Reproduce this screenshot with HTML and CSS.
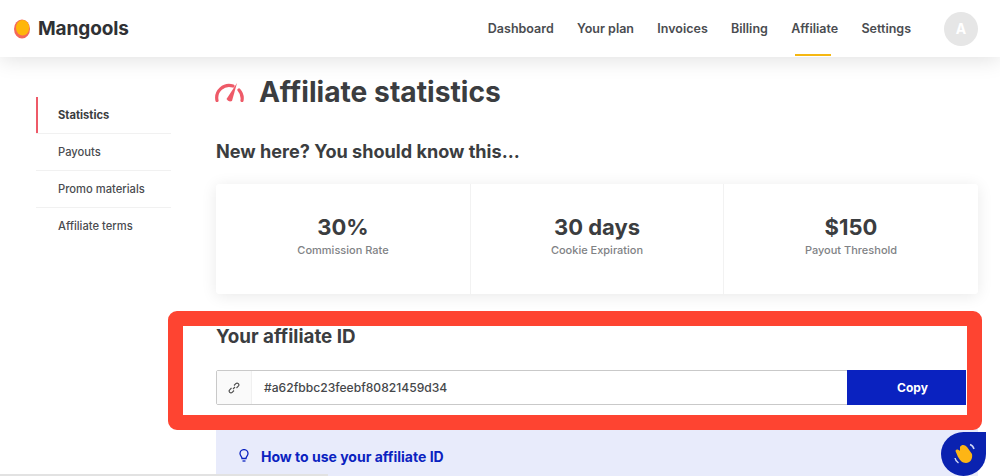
FILE: index.html
```html
<!DOCTYPE html>
<html lang="en">
<head>
<meta charset="utf-8">
<title>Affiliate statistics</title>
<link rel="stylesheet" href="styles.css">
</head>
<body>
<header class="topbar">
  <a class="brand">
    <svg class="brand-mark" width="18" height="20" viewBox="0 0 18 20"><ellipse cx="9" cy="10" rx="8" ry="9.5" fill="#f4685a"/><ellipse cx="9.6" cy="8.8" rx="6.6" ry="7.8" fill="#ffb60a"/></svg>
    <span class="brand-name">Mangools</span>
  </a>
  <nav class="mainnav">
    <a class="navlink">Dashboard</a>
    <a class="navlink">Your plan</a>
    <a class="navlink">Invoices</a>
    <a class="navlink">Billing</a>
    <a class="navlink navlink-active">Affiliate</a>
    <a class="navlink">Settings</a>
  </nav>
  <div class="avatar">A</div>
</header>
<div class="page">
  <aside class="sidebar">
    <a class="sidelink sidelink-active">Statistics</a>
    <a class="sidelink">Payouts</a>
    <a class="sidelink">Promo materials</a>
    <a class="sidelink">Affiliate terms</a>
  </aside>
  <main class="content">
    <div class="title-row">
      <svg class="gauge" width="30" height="20" viewBox="0 0 30 20" fill="none"><path d="M2 18.500A12.500 12.500 0 0 1 18 4" stroke="#ee5a68" stroke-width="3.200" stroke-linecap="round"/><path d="M24 8A12.500 12.500 0 0 1 27 18.500" stroke="#ee5a68" stroke-width="3.200" stroke-linecap="round"/><path d="M11.500 17L22 1L17 19Q13.500 20.500 11.500 17Z" fill="#ee5a68"/></svg>
      <h1 class="title">Affiliate statistics</h1>
    </div>
    <h2 class="subtitle">New here? You should know this...</h2>
    <section class="stats">
      <div class="stat"><div class="stat-value">30%</div><div class="stat-label">Commission Rate</div></div>
      <div class="stat"><div class="stat-value">30 days</div><div class="stat-label">Cookie Expiration</div></div>
      <div class="stat"><div class="stat-value">$150</div><div class="stat-label">Payout Threshold</div></div>
    </section>
    <h2 class="idtitle">Your affiliate ID</h2>
    <div class="idfield">
      <div class="idicon">
        <svg width="12" height="12" viewBox="0 0 12 12" fill="none" stroke="#4c4c4c" stroke-width="1.100"><path d="M5 7L7 5"/><path d="M6 3.500L7.800 1.700A1.700 1.700 0 0 1 10.300 4.200L8.500 6"/><path d="M6 8.500L4.200 10.300A1.700 1.700 0 0 1 1.700 7.800L3.500 6"/></svg>
      </div>
      <div class="idvalue">#a62fbbc23feebf80821459d34</div>
      <button class="copy">Copy</button>
    </div>
    <div class="tip">
      <svg width="10" height="14" viewBox="0 0 10 14" fill="none" stroke="#0a22c0" stroke-width="1.300"><path d="M3 9.500C3 7.800 1 7 1 4.600A4 4 0 0 1 9 4.600C9 7 7 7.800 7 9.500Z"/><path d="M3.500 12H6.500"/></svg>
      <span class="tip-text">How to use your affiliate ID</span>
    </div>
  </main>
</div>
<div class="annotation"></div>
<div class="chat">
  <svg width="24" height="24" viewBox="0 0 24 24" fill="none"><path d="M8 5C10 2 13 3 15 5L20 12C21 17 18 21 14 21C10 21 8 18 6 15L3.500 9C4 7 6 7 8 9Z" fill="#fdb515"/><path d="M3 16Q3.500 19 6.500 21" stroke="#cfd6f5" stroke-width="1.500"/><path d="M18 2.500Q21 3.500 22 7" stroke="#cfd6f5" stroke-width="1.500"/></svg>
</div>
<div class="bottomline"></div>
</body>
</html>
```
FILE: styles.css
```css
* { box-sizing: border-box; }
html, body { margin: 0; height: 476px; overflow: hidden; }
body { background: #fff; font-family: "Inter", "Liberation Sans", sans-serif; color: #3b3d40; position: relative; }
.topbar { height: 57px; display: flex; align-items: center; padding: 0 22px 0 13px; background: #fff; box-shadow: 0 2px 22px rgba(0,0,0,.13); position: relative; }
.brand { display: flex; align-items: center; gap: 7px; }
.brand-mark { display: block; margin-top: 1px; }
.brand-name { font-size: 19px; font-weight: 700; color: #2f3134; letter-spacing: -.1px; }
.mainnav { display: flex; gap: 23.300px; margin-left: auto; align-self: stretch; }
.navlink { display: flex; align-items: center; font-size: 12.500px; font-weight: 600; color: #4a4c50; position: relative; }
.navlink-active::after { content: ""; position: absolute; left: 4px; right: 7px; bottom: 1px; height: 2px; background: #f5b712; }
.avatar { width: 34px; height: 34px; margin-left: 33px; border-radius: 50%; background: #e6e6e6; color: #fff; display: flex; align-items: center; justify-content: center; font-weight: 700; font-size: 14px; }
.page { display: flex; padding-left: 36px; }
.sidebar { width: 135px; margin-top: 40px; flex: none; }
.sidelink { display: flex; align-items: center; height: 37px; padding-left: 22px; font-size: 11.200px; font-weight: 500; color: #4a4c50; border-bottom: 1px solid #f1f1f1; }
.sidelink:last-child { border-bottom-color: transparent; }
.sidelink-active { font-weight: 700; box-shadow: inset 2px 0 0 #ee5a68; color: #3b3d40; }
.content { width: 762px; margin-left: 45px; }
.title-row { display: flex; align-items: center; height: 40px; margin-top: 15px; gap: 14px; }
.gauge { display: block; margin-left: -1px; }
.title { margin: 0; font-size: 28.200px; font-weight: 700; color: #3b3d40; }
.subtitle { margin: 27px 0 0; font-size: 18.100px; line-height: 24px; font-weight: 700; color: #3b3d40; }
.stats { display: grid; grid-template-columns: 254px 253px 255px; height: 110px; margin-top: 21px; background: #fff; border-radius: 3px; box-shadow: 0 2px 16px rgba(0,0,0,.09); }
.stat { display: flex; flex-direction: column; align-items: center; padding-top: 30px; border-left: 1px solid #f2f2f2; }
.stat:first-child { border-left: 0; }
.stat-value { font-size: 22px; line-height: 26px; font-weight: 700; color: #3b3d40; }
.stat-label { font-size: 11px; line-height: 14px; margin-top: 3px; color: #808285; font-weight: 500; }
.idtitle { margin: 31px 0 0; font-size: 18.800px; line-height: 24px; font-weight: 700; color: #3b3d40; }
.idfield { display: flex; width: 750px; height: 35px; margin-top: 21px; border: 1px solid #c9c9c9; border-radius: 2px 0 0 2px; }
.idicon { width: 35px; display: flex; align-items: center; justify-content: center; background: #fafafa; border-right: 1px solid #f0f0f0; }
.idvalue { flex: 1; display: flex; align-items: center; padding-left: 12px; font-size: 12.100px; font-weight: 500; color: #45474a; }
.copy { width: 119px; margin: -1px -1px -1px 0; padding: 0 0 0 12px; border: 0; background: #0a22c0; color: #fff; font: 700 12px "Inter", "Liberation Sans", sans-serif; }
.tip { display: flex; align-items: center; gap: 12px; height: 60px; margin-top: 15px; padding: 12px 0 0 23px; background: #e8ebfb; }
.tip-text { font-size: 14px; font-weight: 700; color: #0a22c0; }
.annotation { position: absolute; left: 168px; top: 311px; width: 814px; height: 119px; border: 15px solid #fe4431; border-radius: 9px; }
.chat { position: absolute; left: 941px; top: 432px; width: 45px; height: 44px; background: #0a22b0; border-radius: 50% 0 50% 50%; display: flex; align-items: center; justify-content: center; }
.bottomline { position: absolute; left: 0; bottom: 0; width: 328px; height: 2px; background: #e2e2e2; }
```
